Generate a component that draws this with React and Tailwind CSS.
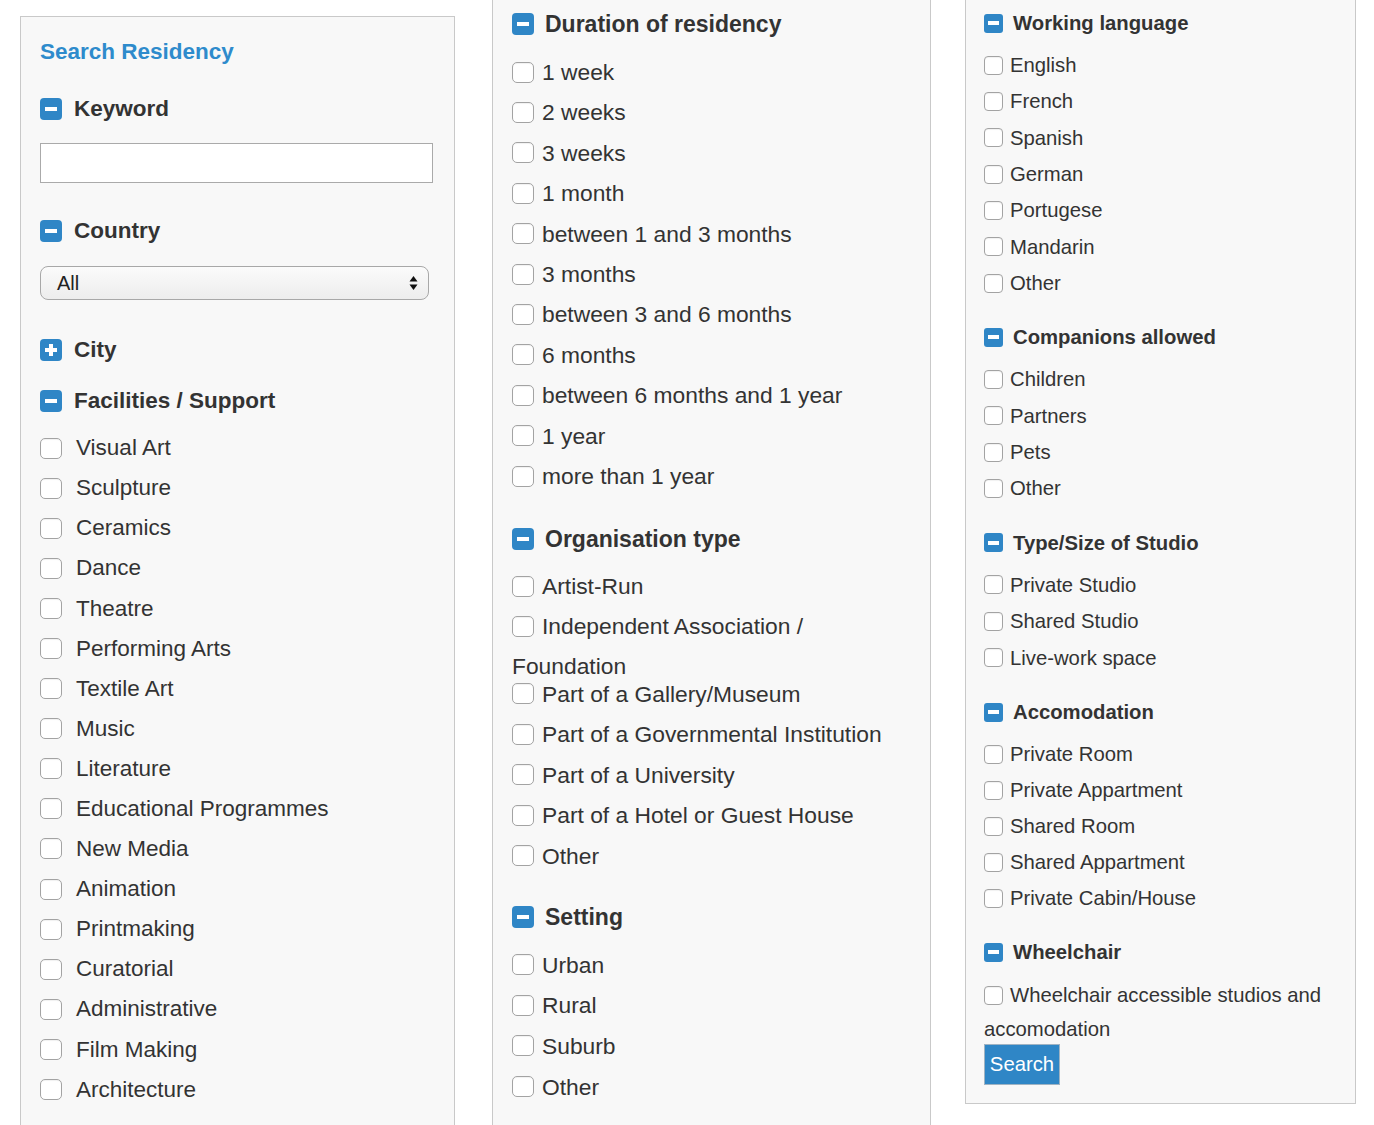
import React from 'react'

const col1 = {
  heading: 'text-[22.5px] leading-[26px]',
  icon: 'w-[22px] h-[22px] rounded-[4px]',
  bar: 'w-[12px] h-[4px]',
  hgap: 'gap-[12px]',
  row: 'h-[40.1px] text-[22.5px] gap-[14px]',
  box: 'w-[22px] h-[21px] rounded-[5px]',
}

const col2 = {
  heading: 'text-[23px] leading-[26px]',
  icon: 'w-[22px] h-[22px] rounded-[4px]',
  bar: 'w-[12px] h-[4px]',
  hgap: 'gap-[11px]',
  row: 'h-[40.4px] text-[22.8px] gap-[8px]',
  box: 'w-[22px] h-[21px] rounded-[5px]',
}

const col3 = {
  heading: 'text-[20.3px] leading-[24px]',
  icon: 'w-[19px] h-[19px] rounded-[3px]',
  bar: 'w-[11px] h-[4px]',
  hgap: 'gap-[10px]',
  row: 'h-[36.33px] text-[20.3px] gap-[7px]',
  box: 'w-[19px] h-[19px] rounded-[4px]',
}

function Toggle({ c, open = true }) {
  return (
    <span className={`relative shrink-0 bg-[#2f86c6] flex items-center justify-center ${c.icon}`}>
      <span className={`bg-white ${c.bar}`} />
      {!open && <span className="absolute w-[4px] h-[12px] bg-white" />}
    </span>
  )
}

function Heading({ c, children, open, className = '' }) {
  return (
    <div className={`flex items-center ${c.hgap} ${className}`}>
      <Toggle c={c} open={open} />
      <span className={`font-bold text-[#333] ${c.heading}`}>{children}</span>
    </div>
  )
}

function Box({ c }) {
  return <span className={`shrink-0 bg-white border border-[#a3a3a3] shadow-[inset_0_1px_1px_rgba(0,0,0,0.06)] ${c.box}`} />
}

function Check({ c, label, rowClass }) {
  return (
    <div className={`flex items-center text-[#333] ${rowClass || c.row}`}>
      <Box c={c} />
      <span>{label}</span>
    </div>
  )
}

function List({ c, items, className = '', rowClass }) {
  return (
    <div className={className}>
      {items.map((it) => (
        <Check key={it} c={c} label={it} rowClass={rowClass} />
      ))}
    </div>
  )
}

const facilities = [
  'Visual Art', 'Sculpture', 'Ceramics', 'Dance', 'Theatre', 'Performing Arts', 'Textile Art',
  'Music', 'Literature', 'Educational Programmes', 'New Media', 'Animation', 'Printmaking',
  'Curatorial', 'Administrative', 'Film Making', 'Architecture',
]

const durations = [
  '1 week', '2 weeks', '3 weeks', '1 month', 'between 1 and 3 months', '3 months',
  'between 3 and 6 months', '6 months', 'between 6 months and 1 year', '1 year', 'more than 1 year',
]

export default function App() {
  return (
    <div className="h-[1125px] overflow-hidden bg-white flex items-start font-['Liberation_Sans',Arial,sans-serif]">
      {/* left column */}
      <div className="ml-[20px] mt-[16px] w-[435px] h-[1200px] shrink-0 border border-[#c9c9c9] bg-[#f8f8f8] pl-[19px] pt-[22px]">
        <div className="text-[22.5px] leading-[26px] font-bold text-[#2e8bcc]">Search Residency</div>

        <Heading c={col1} className="mt-[31px]">Keyword</Heading>
        <div className="mt-[21px] w-[393px] h-[40px] bg-white border border-[#aaaaaa]" />

        <Heading c={col1} className="mt-[35px]">Country</Heading>
        <div className="mt-[22px] w-[389px] h-[34px] rounded-[8px] border border-[#a8a8a8] bg-gradient-to-b from-[#fbfbfb] to-[#ededed] flex items-center justify-between pl-[16px] pr-[10px]">
          <span className="text-[20px] text-[#222]">All</span>
          <svg width="9" height="16" viewBox="0 0 9 16">
            <path d="M4.5 1 L8.5 6.5 L0.5 6.5 Z" fill="#111" />
            <path d="M4.5 15 L8.5 9.5 L0.5 9.5 Z" fill="#111" />
          </svg>
        </div>

        <Heading c={col1} open={false} className="mt-[37px]">City</Heading>
        <Heading c={col1} className="mt-[25px]">Facilities / Support</Heading>
        <List c={col1} items={facilities} className="mt-[14px]" />
      </div>

      {/* middle column */}
      <div className="ml-[37px] w-[439px] h-[1200px] shrink-0 border border-t-0 border-[#c9c9c9] bg-[#f8f8f8] pl-[19px] pt-[11px]">
        <Heading c={col2}>Duration of residency</Heading>
        <List c={col2} items={durations} className="mt-[15px]" />

        <Heading c={col2} className="mt-[30px]">Organisation type</Heading>
        <div className="mt-[14px]">
          <Check c={col2} label="Artist-Run" rowClass="h-[40px] text-[22.8px] gap-[8px]" />
          <Check c={col2} label="Independent Association /" rowClass="h-[40px] text-[22.8px] gap-[8px]" />
          <div className="h-[27px] leading-[40px] text-[22.8px] text-[#333]">Foundation</div>
          <List
            c={col2}
            rowClass="h-[40.6px] text-[22.8px] gap-[8px]"
            items={['Part of a Gallery/Museum', 'Part of a Governmental Institution', 'Part of a University', 'Part of a Hotel or Guest House', 'Other']}
          />
        </div>

        <Heading c={col2} className="mt-[28px]">Setting</Heading>
        <List c={col2} rowClass="h-[40.7px] text-[22.8px] gap-[8px]" items={['Urban', 'Rural', 'Suburb', 'Other']} className="mt-[14px]" />
      </div>

      {/* right column */}
      <div className="ml-[34px] w-[391px] shrink-0 border border-t-0 border-[#c9c9c9] bg-[#f8f8f8] pl-[18px] pt-[11px] pb-[18px]">
        <Heading c={col3}>Working language</Heading>
        <List c={col3} items={['English', 'French', 'Spanish', 'German', 'Portugese', 'Mandarin', 'Other']} className="mt-[12px]" />

        <Heading c={col3} className="mt-[24px]">Companions allowed</Heading>
        <List c={col3} items={['Children', 'Partners', 'Pets', 'Other']} className="mt-[12px]" />

        <Heading c={col3} className="mt-[24px]">Type/Size of Studio</Heading>
        <List c={col3} rowClass="h-[36.5px] text-[20.3px] gap-[7px]" items={['Private Studio', 'Shared Studio', 'Live-work space']} className="mt-[12px]" />

        <Heading c={col3} className="mt-[24px]">Accomodation</Heading>
        <List
          c={col3}
          rowClass="h-[36px] text-[20.3px] gap-[7px]"
          items={['Private Room', 'Private Appartment', 'Shared Room', 'Shared Appartment', 'Private Cabin/House']}
          className="mt-[12px]"
        />

        <Heading c={col3} className="mt-[24px]">Wheelchair</Heading>
        <div className="mt-[13px]">
          <Check c={col3} label="Wheelchair accessible studios and" rowClass="h-[36px] text-[20.3px] gap-[7px]" />
          <div className="h-[32px] leading-[32px] text-[20.3px] text-[#333]">accomodation</div>
        </div>
        <button className="-mt-[1px] block h-[41px] w-[76px] bg-[#2f86c6] border border-[#9fb3c3] text-white text-[20.3px] leading-none">
          Search
        </button>
      </div>
    </div>
  )
}
